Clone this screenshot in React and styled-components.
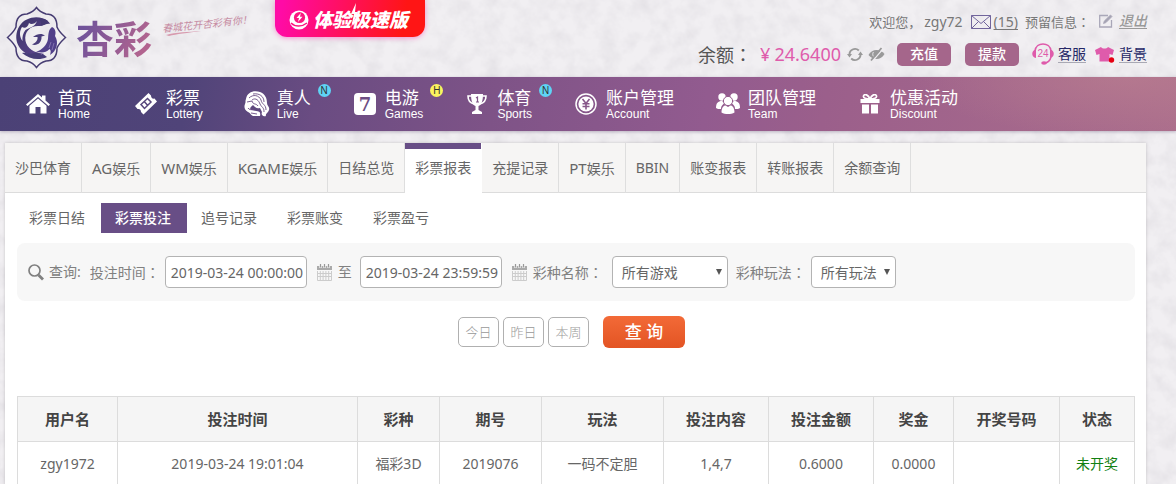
import React from "react";
import styled, { createGlobalStyle, css } from "styled-components";

const purple = "#684e86";
const rose = "#a5668b";
const line = "#dcdcdc";

const GlobalStyle = createGlobalStyle`
  *, *::before, *::after { box-sizing: border-box; }
  html { scrollbar-width: none; }
  body {
    margin: 0;
    background: #f1eff2;
    color: #666;
    font-family: "Noto Sans", "Noto Sans CJK SC", sans-serif;
    font-size: 14px;
    line-height: 20px;
  }
  button, input, select { font-family: inherit; margin: 0; }
  svg { display: block; flex: none; }
`;

const Page = styled.div`
  position: relative;
  min-height: 100vh;
  overflow: hidden;
`;

const Texture = styled.svg`
  position: absolute;
  inset: 0;
  width: 100%;
  height: 100%;
`;

const Content = styled.div`
  position: relative;
`;

/* full-width colon, centred in its cell */
const Colon = styled.span`
  font-family: "Noto Sans CJK TC", sans-serif;
`;

/* ---------- header ---------- */

const Header = styled.header`
  display: flex;
  align-items: flex-start;
  height: 77px;
  padding: 0 29px 0 6px;
`;

const Brand = styled.a`
  display: flex;
  align-items: center;
  gap: 9px;
  padding-top: 6px;
  text-decoration: none;
`;

const BrandName = styled.span`
  font-size: 38px;
  line-height: 48px;
  font-weight: 700;
  background: linear-gradient(115deg, #71539a 15%, #b2648f 85%);
  background-clip: text;
  color: transparent;
`;

const Slogan = styled.span`
  display: block;
  width: 84px;
  margin: 17px 0 0 10px;
  color: #c68ba2;
  font-size: 10px;
  line-height: 14px;
  font-style: italic;
  white-space: nowrap;
  transform: rotate(-6deg);
`;

const Swoosh = styled.svg`
  margin-top: 0;
`;

const Promo = styled.a`
  display: flex;
  align-items: center;
  justify-content: center;
  gap: 4px;
  width: 150px;
  height: 37px;
  margin-left: 29px;
  padding: 2px 3px 0 0;
  border-radius: 0 0 12px 12px;
  background: linear-gradient(100deg, #ff0ba6 5%, #ff1515 85%);
  box-shadow: 0 1px 5px rgba(255, 60, 180, 0.5);
  color: #fff;
  font-size: 19px;
  font-style: italic;
  font-weight: 800;
  line-height: 28px;
  text-decoration: none;
  white-space: nowrap;
`;

const PromoText = styled.span`
  position: relative;
`;

const Bolt = styled.svg`
  position: absolute;
  left: 36px;
  top: -3px;
`;

const Account = styled.div`
  display: flex;
  flex-direction: column;
  align-items: flex-end;
  margin-left: auto;
  padding-top: 12px;
`;

const AccountRow = styled.div`
  display: flex;
  align-items: center;
  height: ${(p) => (p.$tall ? "24px" : "20px")};
  margin-top: ${(p) => (p.$tall ? "10px" : "0")};
  white-space: nowrap;
`;

const Greeting = styled.span`
  margin-right: ${(p) => p.$gap || 0}px;
  color: #777;
  font-size: ${(p) => (p.$latin ? 14 : 13)}px;
`;

const MailLink = styled.a`
  display: flex;
  align-items: center;
  gap: 3px;
  margin-right: 7px;
  color: #777;
  text-underline-offset: 2px;
`;

const Logout = styled.a`
  display: flex;
  align-items: center;
  gap: 6px;
  padding-bottom: 3px;
  color: #999;
  font-style: italic;
  font-weight: 500;
  text-underline-offset: 2px;
`;

const Balance = styled.span`
  color: #555;
  font-size: 18px;
`;

const Amount = styled.span`
  display: flex;
  gap: 4px;
  margin: 0 6px 0 8px;
  color: #df5bab;
  font-size: 18px;
`;

const IconButton = styled.button`
  display: flex;
  padding: 0;
  margin-right: ${(p) => p.$gap}px;
  border: 0;
  background: none;
  color: #999;
`;

const MoneyButton = styled.button`
  width: 54px;
  height: 23px;
  margin-right: ${(p) => p.$gap}px;
  padding: 0;
  border: 0;
  border-radius: 5px;
  background: ${rose};
  color: #fff;
  font-size: 14px;
  line-height: 22px;
  font-weight: 500;
`;

const ToolLink = styled.a`
  display: flex;
  align-items: center;
  gap: 4px;
  margin-left: ${(p) => p.$gap || 0}px;
  color: #252766;
  text-decoration: none;

  span {
    border-bottom: 1px solid #a9a9b4;
    line-height: 17px;
  }
`;

/* ---------- main navigation ---------- */

const Nav = styled.nav`
  display: flex;
  height: 54px;
  padding-left: 5px;
  background:
    radial-gradient(ellipse 220px 60px at 1130px 0, rgba(190, 130, 145, 0.55), transparent),
    linear-gradient(100deg, #4b4176 0%, #504479 16%, #6a4c82 27%, #7e5387 42%, #925b8f 60%, #9b5f8b 70%, #ab6e8c 100%);
  box-shadow: 0 1px 3px rgba(80, 60, 100, 0.35);
`;

const NavLink = styled.a`
  display: flex;
  align-items: center;
  gap: 8px;
  padding: 0 21px 1px;
  color: #fff;
  text-decoration: none;
`;

const NavIcon = styled.span`
  display: flex;
  justify-content: center;
  width: 24px;
`;

const NavText = styled.span`
  position: relative;
  display: flex;
  flex-direction: column;
  font-size: 17px;
  line-height: 20px;
  white-space: nowrap;

  small {
    font-family: "Liberation Sans", Arial, sans-serif;
    font-size: 12px;
    line-height: 12px;
  }
`;

const Badge = styled.i`
  position: absolute;
  top: -4px;
  right: -20px;
  width: 13px;
  height: 13px;
  border-radius: 50%;
  background: ${(p) => (p.$hot ? "#fbf35f" : "#5fd4f5")};
  color: #333;
  font: normal 10px/13px "Liberation Sans", Arial, sans-serif;
  text-align: center;
`;

/* ---------- panel and tabs ---------- */

const Panel = styled.main`
  margin: 12px 30px 0 5px;
  background: #fff;
  box-shadow: 0 0 3px rgba(0, 0, 0, 0.18);
`;

const Tabs = styled.nav`
  display: flex;
  height: 50px;
  background: #f6f5f4;
  box-shadow: inset 0 -1px ${line};
`;

const Tab = styled.a`
  padding: 0 10px;
  border-right: 1px solid #dedede;
  color: #666;
  line-height: 50px;
  text-decoration: none;
  white-space: nowrap;

  ${(p) =>
    p.$active &&
    css`
      border-right-color: #fff;
      background: linear-gradient(${purple} 6px, #fff 6px);
    `}
`;

const Latin = styled.span`
  font-size: 15px;
`;

const SubTabs = styled.nav`
  display: flex;
  padding: 10px 10px 0;
`;

const SubTab = styled.a`
  padding: 0 16px 0 14px;
  background: ${(p) => (p.$active ? purple : "transparent")};
  color: ${(p) => (p.$active ? "#fff" : "#666")};
  font-weight: ${(p) => (p.$active ? 500 : 400)};
  line-height: 30px;
  text-decoration: none;
`;

/* ---------- search form ---------- */

const Form = styled.form`
  padding: 10px 11px 0 12px;
`;

const Filters = styled.div`
  display: flex;
  align-items: center;
  height: 58px;
  padding: 0 11px;
  border-radius: 8px;
  background: #f7f7f7;
  color: #808080;
  white-space: nowrap;
`;

const Caption = styled.span`
  margin: 0 9px 0 5px;
`;

const FieldLabel = styled.label`
  margin-right: ${(p) => p.$gap}px;
`;

const fieldBox = css`
  height: 32px;
  border: 1px solid #b3b3b3;
  border-radius: 4px;
  background: #fff;
  color: #666;
  font-size: 14px;
`;

const DateInput = styled.input`
  ${fieldBox}
  width: 142px;
  padding: 0 0 0 5px;
`;

const CalendarButton = styled.button`
  display: flex;
  margin: 0 6px 0 10px;
  padding: 0;
  border: 0;
  background: none;
`;

const SelectBox = styled.span`
  position: relative;
  display: block;
  width: ${(p) => p.$width}px;
  margin-right: 8px;

  &::after {
    content: "";
    position: absolute;
    top: 13px;
    right: 6px;
    border: 3px solid transparent;
    border-top: 6px solid #555;
    border-bottom: 0;
    pointer-events: none;
  }
`;

const Select = styled.select`
  ${fieldBox}
  display: block;
  width: 100%;
  padding: 0 9px;
  appearance: none;
`;

const Actions = styled.div`
  display: flex;
  align-items: center;
  justify-content: center;
  gap: 4px;
  padding: 15px 9px 0 0;
`;

const RangeButton = styled.button`
  width: 41px;
  height: 30px;
  padding: 0;
  border: 1px solid #b0b0b0;
  border-radius: 5px;
  background: #fff;
  color: #999;
  font-size: 13px;
  line-height: 26px;
  font-weight: 300;
`;

const SubmitButton = styled.button`
  width: 82px;
  height: 32px;
  margin-left: 10px;
  padding: 0;
  border: 0;
  border-radius: 6px;
  background: linear-gradient(#f36a37, #e35424);
  color: #fff;
  font-size: 17px;
  line-height: 30px;
  font-weight: 500;
`;

/* ---------- results ---------- */

const TableWrap = styled.div`
  padding: 48px 11px 0 12px;
`;

const Table = styled.table`
  width: 100%;
  table-layout: fixed;
  border-collapse: collapse;
  text-align: center;
`;

const Th = styled.th`
  width: ${(p) => p.$width}px;
  height: 45px;
  padding: 0;
  border: 1px solid ${line};
  background: #f5f5f5;
  color: #444;
  font-size: 15px;
  font-weight: 700;
`;

const Td = styled.td`
  height: 45px;
  padding: 0;
  border: 1px solid ${line};
  color: ${(p) => (p.$pending ? "#128012" : "#666")};
`;

/* ---------- icons ---------- */

const LogoMark = () => (
  <svg width="61" height="63" viewBox="0 0 61 63" fill="none">
    <defs>
      <linearGradient id="mark" x1="0" y1="0" x2="1" y2="1">
        <stop offset="0" stopColor="#3b3566" />
        <stop offset="1" stopColor="#5f4593" />
      </linearGradient>
    </defs>
    <path
      d="M30.500 1.500C33 5 37 7 40 8C46 8 51 11 51 21C53 26 57 29 59.500 31.500C57 34 53 37 51 42C51 52 46 55 40 55C36 56 33 58 30.500 61.500C28 58 25 56 21 55C15 55 10 52 10 42C8 37 4 34 1.500 31.500C4 29 8 26 10 21C10 11 15 8 21 8C24 7 28 5 30.500 1.500Z"
      stroke="#463c72"
      strokeWidth="1.500"
    />
    <path
      d="M42 15C34 9 20 10 13.500 20C6 32 12 47 27 49.500C32 50 35 48 38 47C30 48 21 43 19.500 35C18 26 24 20 32 20C37 20 40 18 42 15Z"
      fill="url(#mark)"
    />
    <path d="M16 21C19 23 22 21 23 17C25 19 29 18 31 15C29 21 23 22 19.500 24C17 27 16 31 16.500 35C13 30 13.500 25 16 21Z" fill="#efedf0" />
    <path d="M33 13C38 12 43 15 44 18C41 17 38 20 34 20C36 18 35 15 33 13Z" fill="#443a72" />
    <path d="M27 31C31 27.500 36 27 39 29.500L35.500 30.500C36 37 31 40 26 38.500C30 37 32 34 31.500 31Z" fill="#4a3e7b" />
    <path
      d="M46 21C50 23 50 27 49 30C53 36 51 45 44 49C45 46 45 44 43.500 43C39 48 34 46 30 46C36 44 41 39 42 33C42.500 29 42 24 46 21Z"
      fill="#51408a"
    />
    <path d="M16 47C21 46 23 49 28 47C32 45 33 49 37 48L41 51C33 55 23 53 16 47Z" fill="#463c78" />
    <path d="M48 37L46 44M45 36L43 42" stroke="#8d7fb8" strokeWidth="0.800" />
  </svg>
);

const PromoMark = () => (
  <svg width="20" height="20" viewBox="0 0 20 20">
    <circle cx="10" cy="10" r="9.500" fill="#fff" />
    <circle cx="10.500" cy="7.500" r="5.600" fill="#fb1680" />
    <path d="M11.800 3L7.500 8H10L9 12L13.500 6.700H11Z" fill="#fff" />
    <path d="M2 13C6 17 13 17 18 13" stroke="#fb1680" strokeWidth="1.400" fill="none" />
  </svg>
);

const MailIcon = () => (
  <svg width="20" height="14" viewBox="0 0 20 14" fill="none" stroke="#71659c" strokeWidth="1">
    <path d="M0.500 0.500H19.500V13.500H0.500ZM0.500 0.500L10 8.500L19.500 0.500M0.500 13.500L7.500 6.500M19.500 13.500L12.500 6.500" />
  </svg>
);

const EditIcon = () => (
  <svg width="14" height="14" viewBox="0 0 14 14" fill="none" stroke="#a9a7b8">
    <path d="M9 1.500H0.700V13H12.500V6" strokeWidth="1.300" />
    <path d="M4.500 9.500L5.300 7L11.500 1L13 2.500L7 8.600Z" fill="#a5a3b3" strokeWidth="0.800" />
  </svg>
);

const RefreshIcon = () => (
  <svg width="16" height="15" viewBox="0 0 16 15" fill="none" stroke="currentColor" strokeWidth="1.800">
    <path d="M2.500 8A5.500 5.500 0 0 1 11.800 3.500M13.500 7A5.500 5.500 0 0 1 4.200 11.500" />
    <path d="M0 7H5L2.500 10.500ZM16 8H11L13.500 4.500Z" fill="currentColor" stroke="none" />
  </svg>
);

const EyeOffIcon = () => (
  <svg width="17" height="15" viewBox="0 0 17 15" fill="none">
    <path d="M0.500 8C4 1.500 12 1.500 16.500 7C13 13.500 5 13.500 0.500 8Z" fill="currentColor" />
    <path d="M5.500 5C4 7 5 10 7 10.500" stroke="#efedf0" strokeWidth="1" />
    <path d="M4.500 14L15 2" stroke="#efedf0" strokeWidth="1.200" />
    <path d="M3 13.500L13.500 1" stroke="currentColor" strokeWidth="1.800" />
  </svg>
);

const ServiceIcon = () => (
  <svg width="22" height="22" viewBox="0 0 22 22" fill="none">
    <path d="M3 8C4 -1.500 18 -1.500 19 8M19 14C18 18 16 20 12 20" stroke="#df5bab" strokeWidth="1.500" />
    <path d="M4 6.500V15C-1 14.500 -1 7 4 6.500ZM18 6.500V15C23 14.500 23 7 18 6.500Z" fill="#df5bab" />
    <ellipse cx="12" cy="20" rx="2.800" ry="1.700" fill="#df5bab" />
    <text x="11" y="14" textAnchor="middle" fill="#df5bab" fontFamily="Liberation Sans, sans-serif" fontSize="10">24</text>
  </svg>
);

const ShirtIcon = () => (
  <svg width="20" height="17" viewBox="0 0 20 17">
    <path
      d="M6 1C7.500 3 11.500 3 13 1L19 4L17.500 9L14.500 8V15.500H4.500V8L1.500 9L0 4Z"
      fill="#df5bab"
    />
    <circle cx="16.500" cy="14" r="2.700" fill="#e60012" />
  </svg>
);

const HomeIcon = () => (
  <svg width="24" height="20" viewBox="0 0 24 20" fill="#fff">
    <path d="M0 10.500L12 0L16 3.500V1.500H19.500V6.500L24 10.500L22.500 12L12 3L1.500 12Z" />
    <path d="M3.500 11.700L12 4.600L20.500 11.700V19.500H14.500V13H9.500V19.500H3.500Z" />
  </svg>
);

const TicketIcon = () => (
  <svg width="24" height="24" viewBox="0 0 24 24">
    <path
      d="M14.500 1L17 3.500C17 6 18.500 7 20.500 6.500L23 9.500L9.500 22.500L7 20C7 17.500 5.500 16.500 3.500 17L1 14Z"
      fill="#fff"
    />
    <path d="M13.500 6.500L7 12.500L10.500 16.500L17 10ZM10.200 9.500L13.800 13.500" fill="none" stroke="#57467c" strokeWidth="1.500" />
  </svg>
);

const LadyIcon = () => (
  <svg width="26" height="26" viewBox="0 0 26 26">
    <path
      d="M2 8C3 1 10 -1 16 1C21 3 23 7 23 12C23 15 26 16 25 19C24 22 21 23 22 25C18 26 17 23 18 21L16 17C12 18 11 16 9 14C7 16 5 17 7 19L12 20C15 20 17 21 16 25H9C6 24 7 22 4 21C0 19 0 15 1 13C2 11 1 10 2 8Z"
      fill="#fff"
    />
    <path
      d="M5 7C9 3 15 4 17 9C18 14 22 13 22 19M8 9C12 6 15 10 16 13C18 17 20 16 20 21M3 11L8 10C9 14 12 12 14 15M9 3C15 2 20 5 20 11M4 17C5 19 8 19 10 18M7 22L13 23"
      fill="none"
      stroke="#6a4c82"
      strokeWidth="0.900"
    />
  </svg>
);

const SevenIcon = () => (
  <svg width="22" height="22" viewBox="0 0 22 22">
    <rect width="22" height="22" rx="4" fill="#fff" />
    <text x="11" y="17.500" textAnchor="middle" fill="#6d4d83" fontFamily="DejaVu Serif, serif" fontWeight="700" fontSize="18">7</text>
  </svg>
);

const TrophyIcon = () => (
  <svg width="20" height="20" viewBox="0 0 20 20" fill="none">
    <path d="M4.500 2H1C1 7 3 9 7 10M15.500 2H19C19 7 17 9 13 10" stroke="#fff" strokeWidth="1.600" />
    <path d="M4 0H16C16 7 14.500 11 11.500 12V16L15 18V20H5V18L8.500 16V12C5.500 11 4 7 4 0Z" fill="#fff" />
    <path d="M9 4L10.500 3V8M9 8H12" stroke="#815488" strokeWidth="1.200" />
  </svg>
);

const CoinIcon = () => (
  <svg width="22" height="22" viewBox="0 0 22 22" fill="none">
    <circle cx="11" cy="11" r="10" stroke="#fff" strokeWidth="1.500" />
    <circle cx="11" cy="11" r="7.600" fill="#fff" />
    <path d="M7.500 6L11 10.500L14.500 6M11 10.500V16.500M7.500 10.800H14.500M7.500 13.500H14.500" stroke="#875789" strokeWidth="1.600" />
  </svg>
);

const TeamIcon = () => (
  <svg width="24" height="21" viewBox="0 0 24 21" fill="#fff">
    <circle cx="6" cy="4" r="3.700" />
    <circle cx="18" cy="4" r="3.700" />
    <path d="M0 15C0 10 2 8 6 8L9 10C6 12 5 13 5 16C3 16 1 16 0 15ZM24 15C24 10 22 8 18 8L15 10C18 12 19 13 19 16C21 16 23 16 24 15Z" />
    <circle cx="12" cy="8" r="4.600" stroke="#945b8d" strokeWidth="1" />
    <path d="M5.500 19.500C5.500 15 7.500 12.500 9.500 12.500L12 14L14.500 12.500C16.500 12.500 18.500 15 18.500 19.500C15 21.500 9 21.500 5.500 19.500Z" />
  </svg>
);

const GiftIcon = () => (
  <svg width="20" height="20" viewBox="0 0 20 20" fill="#fff">
    <path d="M10 5C6 5 3 4 3.500 2C4.500 -1 8.500 1 10 5C11.500 1 15.500 -1 16.500 2C17 4 14 5 10 5Z" fill="none" stroke="#fff" strokeWidth="1.700" />
    <path d="M0.500 5H19.500V9H0.500ZM2 10.500H9V19.500H2ZM11 10.500H18V19.500H11Z" />
  </svg>
);

const SearchIcon = () => (
  <svg width="16" height="17" viewBox="0 0 16 17" fill="none" stroke="#808080">
    <circle cx="6.500" cy="6.500" r="5.500" strokeWidth="1.700" />
    <path d="M10.500 11L15 15.500" strokeWidth="2.800" />
  </svg>
);

const CalendarIcon = () => (
  <svg width="15" height="17" viewBox="0 0 15 17">
    <path d="M0 2H15V6H0Z" fill="#aaa" />
    <path d="M3.500 0V4M7.500 0V4M11.500 0V4" stroke="#f7f7f7" strokeWidth="2.400" />
    <path d="M3.500 0V3.500M7.500 0V3.500M11.500 0V3.500" stroke="#999" strokeWidth="1.200" />
    <path d="M0.500 7V16.500H14.500V7M3.300 7V16.500M6.100 7V16.500M8.900 7V16.500M11.700 7V16.500M0 9.500H15M0 12.500H15" fill="none" stroke="#ccc" strokeWidth="1" />
  </svg>
);

/* ---------- data ---------- */

const navItems = [
  { name: "首页", en: "Home", Icon: HomeIcon },
  { name: "彩票", en: "Lottery", Icon: TicketIcon },
  { name: "真人", en: "Live", Icon: LadyIcon, badge: "N" },
  { name: "电游", en: "Games", Icon: SevenIcon, badge: "H" },
  { name: "体育", en: "Sports", Icon: TrophyIcon, badge: "N" },
  { name: "账户管理", en: "Account", Icon: CoinIcon },
  { name: "团队管理", en: "Team", Icon: TeamIcon },
  { name: "优惠活动", en: "Discount", Icon: GiftIcon },
];

const tabs = [
  ["", "沙巴体育"], ["AG", "娱乐"], ["WM", "娱乐"], ["KGAME", "娱乐"],
  ["", "日结总览"], ["", "彩票报表"], ["", "充提记录"], ["PT", "娱乐"],
  ["", "BBIN"], ["", "账变报表"], ["", "转账报表"], ["", "余额查询"],
];

const subTabs = ["彩票日结", "彩票投注", "追号记录", "彩票账变", "彩票盈亏"];

const columns = [
  ["用户名", 100], ["投注时间", 240], ["彩种", 82], ["期号", 102], ["玩法", 122],
  ["投注内容", 105], ["投注金额", 105], ["奖金", 80], ["开奖号码", 106], ["状态", 75],
];

const rows = [
  ["zgy1972", "2019-03-24 19:01:04", "福彩3D", "2019076", "一码不定胆", "1,4,7", "0.6000", "0.0000", "", "未开奖"],
];

export default function App() {
  return (
    <Page>
      <GlobalStyle />
      <Texture aria-hidden="true">
        <filter id="marble">
          <feTurbulence type="fractalNoise" baseFrequency="0.06" numOctaves="4" seed="7" />
          <feColorMatrix values="0 0 0 0 0.5  0 0 0 0 0.48  0 0 0 0 0.53  0.4 0.15 0 0 -0.22" />
        </filter>
        <rect width="100%" height="100%" filter="url(#marble)" />
      </Texture>
      <Content>
        <Header>
          <Brand href="#">
            <LogoMark />
            <BrandName>杏彩</BrandName>
          </Brand>
          <div>
            <Slogan>春城花开杏彩有你！</Slogan>
            <Swoosh width="60" height="6" viewBox="0 0 60 6">
              <path d="M14 4C24 1 36 1 49 0C36 2 24 3 17 5Z" fill="#d79aae" />
            </Swoosh>
          </div>
          <Promo href="#">
            <PromoMark />
            <PromoText>
              体验极速版
              <Bolt width="10" height="26" viewBox="0 0 10 26">
                <path d="M7 0L2 11H5L2 25L9 9H6Z" fill="#fff" />
              </Bolt>
            </PromoText>
          </Promo>
          <Account>
            <AccountRow>
              <Greeting $gap={3}>欢迎您，</Greeting>
              <Greeting $latin $gap={8}>zgy72</Greeting>
              <MailLink href="#">
                <MailIcon />
                (15)
              </MailLink>
              <Greeting $gap={9}>预留信息<Colon>：</Colon></Greeting>
              <Logout href="#">
                <EditIcon />
                退出
              </Logout>
            </AccountRow>
            <AccountRow $tall>
              <Balance>余额<Colon>：</Colon></Balance>
              <Amount>
                <span>¥</span>
                <span>24.6400</span>
              </Amount>
              <IconButton type="button" aria-label="刷新" $gap={5}>
                <RefreshIcon />
              </IconButton>
              <IconButton type="button" aria-label="隐藏" $gap={12}>
                <EyeOffIcon />
              </IconButton>
              <MoneyButton type="button" $gap={14}>充值</MoneyButton>
              <MoneyButton type="button" $gap={13}>提款</MoneyButton>
              <ToolLink href="#">
                <ServiceIcon />
                <span>客服</span>
              </ToolLink>
              <ToolLink href="#" $gap={9}>
                <ShirtIcon />
                <span>背景</span>
              </ToolLink>
            </AccountRow>
          </Account>
        </Header>

        <Nav>
          {navItems.map(({ name, en, Icon, badge }) => (
            <NavLink href="#" key={en}>
              <NavIcon>
                <Icon />
              </NavIcon>
              <NavText>
                {name}
                <small>{en}</small>
                {badge && <Badge $hot={badge === "H"}>{badge}</Badge>}
              </NavText>
            </NavLink>
          ))}
        </Nav>

        <Panel>
          <Tabs>
            {tabs.map(([latin, name]) => (
              <Tab href="#" key={latin + name} $active={name === "彩票报表"}>
                {latin && <Latin>{latin}</Latin>}
                {name}
              </Tab>
            ))}
          </Tabs>
          <SubTabs>
            {subTabs.map((t) => (
              <SubTab href="#" key={t} $active={t === "彩票投注"}>{t}</SubTab>
            ))}
          </SubTabs>

          <Form onSubmit={(e) => e.preventDefault()}>
            <Filters>
              <SearchIcon />
              <Caption>查询:</Caption>
              <FieldLabel htmlFor="from" $gap={5}>投注时间<Colon>：</Colon></FieldLabel>
              <DateInput id="from" defaultValue="2019-03-24 00:00:00" />
              <CalendarButton type="button" aria-label="开始日期">
                <CalendarIcon />
              </CalendarButton>
              <FieldLabel htmlFor="to" $gap={8}>至</FieldLabel>
              <DateInput id="to" defaultValue="2019-03-24 23:59:59" />
              <CalendarButton type="button" aria-label="结束日期">
                <CalendarIcon />
              </CalendarButton>
              <FieldLabel htmlFor="game" $gap={9}>彩种名称<Colon>：</Colon></FieldLabel>
              <SelectBox $width={116}>
                <Select id="game">
                  <option>所有游戏</option>
                </Select>
              </SelectBox>
              <FieldLabel htmlFor="play" $gap={5}>彩种玩法<Colon>：</Colon></FieldLabel>
              <SelectBox $width={85}>
                <Select id="play">
                  <option>所有玩法</option>
                </Select>
              </SelectBox>
            </Filters>
            <Actions>
              <RangeButton type="button">今日</RangeButton>
              <RangeButton type="button">昨日</RangeButton>
              <RangeButton type="button">本周</RangeButton>
              <SubmitButton type="submit">查 询</SubmitButton>
            </Actions>
          </Form>

          <TableWrap>
            <Table>
              <thead>
                <tr>
                  {columns.map(([name, width]) => (
                    <Th key={name} $width={width}>{name}</Th>
                  ))}
                </tr>
              </thead>
              <tbody>
                {rows.map((row) => (
                  <tr key={row[3]}>
                    {row.map((cell, i) => (
                      <Td key={i} $pending={i === 9}>{cell}</Td>
                    ))}
                  </tr>
                ))}
              </tbody>
            </Table>
          </TableWrap>
        </Panel>
      </Content>
    </Page>
  );
}
